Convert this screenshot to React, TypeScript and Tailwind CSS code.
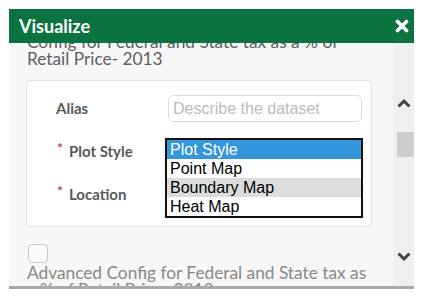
import React from "react";

const lato = { fontFamily: "Lato, 'Open Sans', sans-serif" };
const arial = { fontFamily: "'Liberation Sans', Arial, sans-serif" };

export default function App() {
  return (
    <div className="w-[423px] h-[304px] bg-white overflow-hidden pt-[9px] pl-[9px]" style={lato}>
      <div className="w-[405px] flex flex-col">
        <div className="h-[34px] bg-[#0b7340] flex items-center justify-between pl-[10px] pr-[4px]">
          <span className="text-white font-bold text-[18px] leading-none">Visualize</span>
          <svg width="14" height="14" viewBox="0 0 14 14" className="mr-[1px]">
            <path d="M2.5 2.5 L11.5 11.5 M11.5 2.5 L2.5 11.5" stroke="white" strokeWidth="3.6" strokeLinecap="round" />
          </svg>
        </div>
        <div className="h-[246px] flex bg-[#f7f7f7] border-b-[3px] border-[#a9a9a9]">
          <div className="w-[384px] overflow-hidden">
            <div className="-mt-[10px] pl-[18px] pr-[18px]">
              <div className="text-[17.3px] leading-[17px] text-[#5f5f5f]">
                Config for Federal and State tax as a % of Retail Price- 2013
              </div>
              <div className="mt-[13px] -ml-[1px] w-[346px] bg-white border border-[#e0e0e0] rounded-[4px] pt-[14px] pb-[18px] pl-[29px]">
                <div className="flex items-center h-[27px]">
                  <div className="w-[112px] text-[15px] font-bold text-[#5a5a5a]">Alias</div>
                  <div className="w-[194px] h-[27px] border border-[#ddd] rounded-[5px] flex items-center pl-[4px] text-[16px] text-[#bbb]" style={arial}>
                    Describe the dataset
                  </div>
                </div>
                <div className="flex items-center h-[27px] mt-[16px] relative">
                  <div className="w-[109px] text-[15px] font-bold text-[#5a5a5a] whitespace-nowrap">
                    <span className="text-[#c0395a] text-[14px] relative -top-[4px] ml-[1px] mr-[6px]">*</span>
                    Plot Style
                  </div>
                  <div className="absolute left-[109px] top-0 w-[198px] h-[80px] border-2 border-[#111] bg-white flex flex-col text-[16px] leading-[19px] text-black" style={arial}>
                    <div className="h-[19px] bg-[#3496db] text-white pl-[3px]">Plot Style</div>
                    <div className="h-[19px] pl-[3px]">Point Map</div>
                    <div className="h-[19px] bg-[#dcdcdc] pl-[3px]">Boundary Map</div>
                    <div className="h-[19px] pl-[3px]">Heat Map</div>
                  </div>
                </div>
                <div className="flex items-center h-[27px] mt-[16px]">
                  <div className="w-[109px] text-[15px] font-bold text-[#5a5a5a] whitespace-nowrap">
                    <span className="text-[#c0395a] text-[14px] relative -top-[4px] ml-[1px] mr-[6px]">*</span>
                    Location
                  </div>
                </div>
              </div>
              <div className="mt-[17px] ml-[1px] w-[20px] h-[19px] border border-[#ccc] rounded-[4px] bg-[#fafafa]" />
              <div className="text-[17.3px] leading-[17px] text-[#888] mt-[1px]">
                Advanced Config for Federal and State tax as a % of Retail Price- 2013
              </div>
            </div>
          </div>
          <div className="w-[21px] bg-[#efefef] flex flex-col items-center">
            <svg width="14" height="10" viewBox="0 0 14 10" className="mt-[55px]">
              <path d="M1.5 8.5 L7 3 L12.5 8.5" stroke="#444" strokeWidth="3" fill="none" />
            </svg>
            <div className="mt-[24px] ml-[4px] w-[17px] h-[25px] bg-[#cdcdcd]" />
            <svg width="14" height="10" viewBox="0 0 14 10" className="mt-[95px]">
              <path d="M1.5 1.5 L7 7 L12.5 1.5" stroke="#444" strokeWidth="3" fill="none" />
            </svg>
          </div>
        </div>
      </div>
    </div>
  );
}
